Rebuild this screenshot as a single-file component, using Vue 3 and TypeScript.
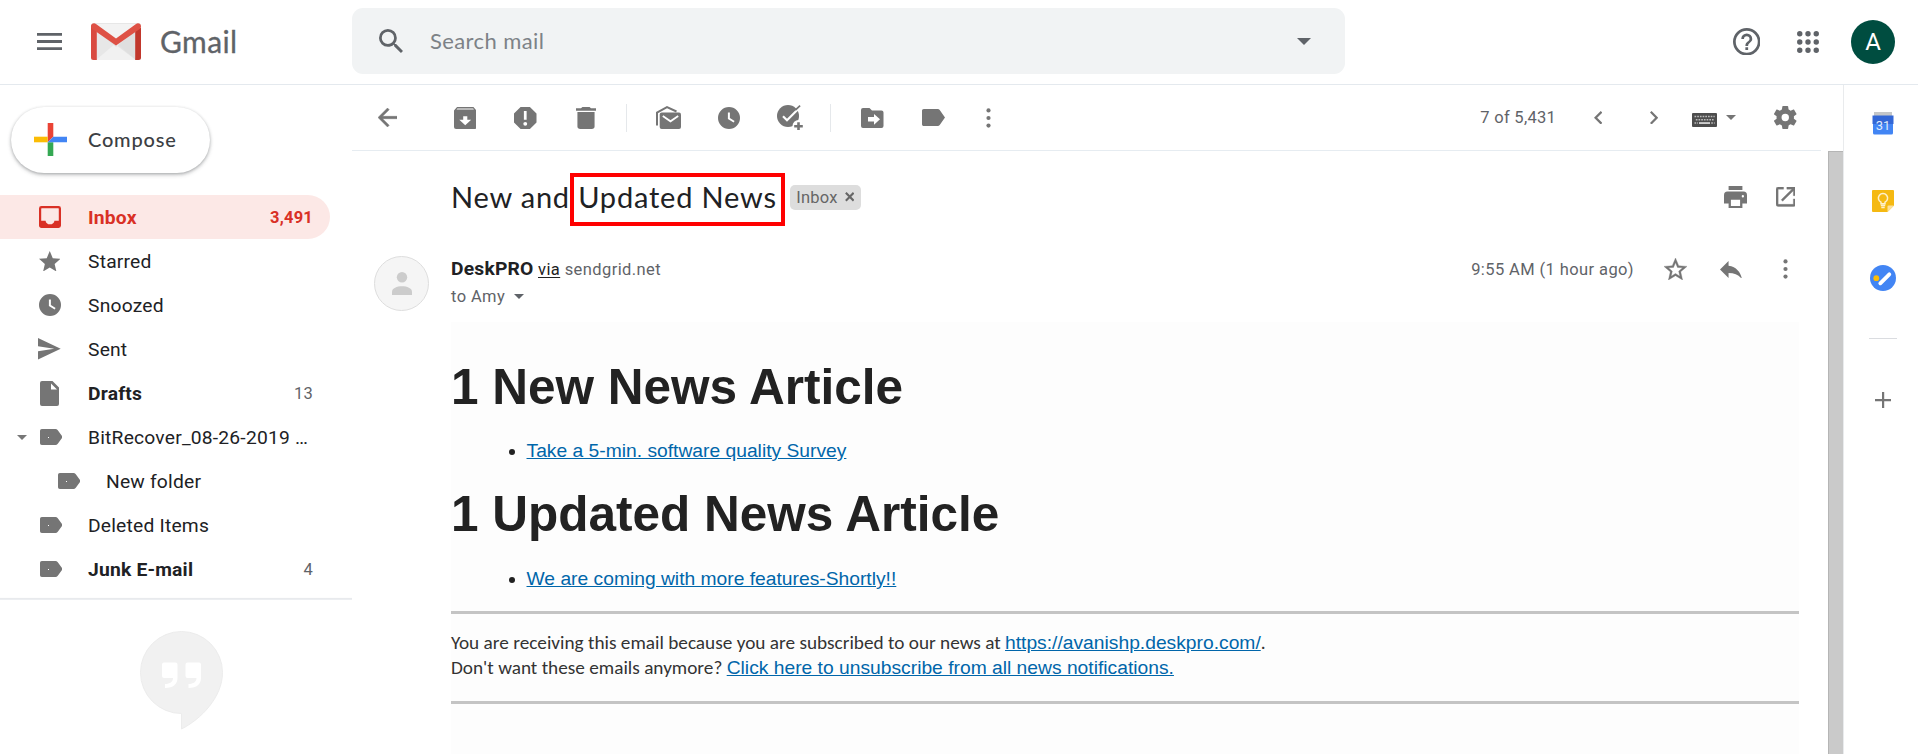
<script setup lang="ts">
import { defineComponent, h } from 'vue'

interface Glyph {
  box: string
  w: number
  h: number
  body: string
}

const glyphs: Record<string, Glyph> = {
  inbox: { box: '3 3 18 18', w: 22, h: 22, body: '<path d="M19 3H5a2 2 0 0 0-2 2v14c0 1.100.9 2 2 2h14a2 2 0 0 0 2-2V5a2 2 0 0 0-2-2zm.2 12H15.600c0 1.700-1.600 3-3.600 3s-3.600-1.300-3.600-3H4.800V5.200c0-.2.200-.4.400-.4h13.600c.2 0 .4.200.4.400V15z"/>' },
  star: { box: '2 2 20 19', w: 21.5, h: 20.5, body: '<path d="M12 17.270 18.180 21l-1.640-7.030L22 9.240l-7.190-.61L12 2 9.190 8.630 2 9.240l5.460 4.730L5.820 21z"/>' },
  starOutline: { box: '2 2 20 19', w: 23, h: 22, body: '<path stroke="currentColor" stroke-width=".3" d="M22 9.240l-7.190-.62L12 2 9.190 8.630 2 9.240l5.460 4.730L5.820 21 12 17.270 18.180 21l-1.630-7.030L22 9.240zM12 15.400l-3.760 2.270 1-4.280-3.320-2.880 4.380-.38L12 6.100l1.710 4.040 4.380.38-3.320 2.880 1 4.280L12 15.400z"/>' },
  clock: { box: '2 2 20 20', w: 22, h: 22, body: '<path d="M12 2a10 10 0 1 0 0 20 10 10 0 0 0 0-20zm4.200 14.200L11 13V7h1.800v5.100l4.300 2.600-.9 1.500z"/>' },
  send: { box: '2 3 21 18', w: 22.7, h: 21.5, body: '<path d="M2.010 21 23 12 2.010 3 2 10l15 2-15 2z"/>' },
  draft: { box: '0 0 19 25', w: 19, h: 25, body: '<path d="M2 0h10.500L19 6.500V23a2 2 0 0 1-2 2H2a2 2 0 0 1-2-2V2a2 2 0 0 1 2-2zm9 2.500v6h6z"/>' },
  tag: { box: '0 0 22.7 16', w: 22.7, h: 16, body: '<path d="M1.800 0h13.700c.9 0 1.600.4 2.100 1.100L22.700 8l-5.100 6.900c-.5.700-1.200 1.100-2.100 1.100H1.800A1.800 1.800 0 0 1 0 14.200V1.800A1.800 1.800 0 0 1 1.800 0z"/><path fill="#fff" d="M8 8h1v1H8z"/>' },
  label: { box: '3 5 19 14', w: 23, h: 17, body: '<path d="M17.630 5.840C17.270 5.330 16.670 5 16 5H4.500C3.600 5 3 5.600 3 6.500v11c0 .9.6 1.500 1.500 1.500H16c.67 0 1.270-.33 1.630-.84L22 12z"/>' },
  caret: { box: '0 0 10 5', w: 10, h: 5, body: '<path d="M0 0h10L5 5z"/>' },
  searchCaret: { box: '0 0 14 7', w: 14, h: 7, body: '<path d="M0 0h14L7 7z"/>' },
  menu: { box: '0 0 25 17', w: 25, h: 17, body: '<path d="M0 0h25v2.800H0zM0 7.100h25v2.800H0zM0 14.200h25V17H0z"/>' },
  search: { box: '3 3 17.5 17.500', w: 24, h: 24, body: '<path d="M15.500 14h-.79l-.28-.27A6.470 6.470 0 0 0 16 9.500 6.500 6.500 0 1 0 9.500 16c1.610 0 3.090-.59 4.230-1.570l.27.280v.79l5 4.990L20.490 19zm-6 0a4.500 4.500 0 1 1 0-9 4.500 4.500 0 0 1 0 9z"/>' },
  back: { box: '4 4 16 16', w: 19, h: 19, body: '<path stroke="currentColor" stroke-width=".4" d="M20 11H7.830l5.590-5.590L12 4l-8 8 8 8 1.410-1.410L7.830 13H20z"/>' },
  archive: { box: '0 0 22 22', w: 22.5, h: 22, body: '<path d="M3 0h16l3 3.500V20a2 2 0 0 1-2 2H2a2 2 0 0 1-2-2V3.500zm.3 1.600-.8 1h17l-.8-1zM9 9.200v3.600H5.200L11 18.200l5.800-5.400H13V9.200z"/>' },
  spam: { box: '3 3 18 18', w: 22.5, h: 22, body: '<path d="M15.730 3H8.270L3 8.270v7.460L8.270 21h7.460L21 15.730V8.270zM12 18.300a1.550 1.550 0 1 1 0-3.100 1.550 1.550 0 0 1 0 3.100zm1.100-4.800h-2.200V6.300h2.200z"/>' },
  trash: { box: '5 3 14 18', w: 20, h: 22, body: '<path d="M6 19a2 2 0 0 0 2 2h8a2 2 0 0 0 2-2V7H6zM19 4h-3.500l-1-1h-5l-1 1H5v2h14z"/>' },
  unread: { box: '0 0 25 23', w: 25, h: 23, body: '<path fill="none" stroke="currentColor" stroke-width="2" d="M1 19.500V6.500L11 1.200l9.500 4.300"/><rect x="3.700" y="6.500" width="21.300" height="16.500" rx="2"/><path fill="none" stroke="#fff" stroke-width="1.800" d="m6.800 10 7.700 5.300 7.700-5.300"/>' },
  addTask: { box: '0 0 26 25', w: 26, h: 25, body: '<circle cx="11" cy="11" r="11"/><path fill="none" stroke="#fff" stroke-width="2.200" d="m6 11.200 4 4L22.500 2.700"/><path fill="none" stroke="currentColor" stroke-width="1.700" d="m18.300 5.200 4.800-4.500"/><circle cx="21.500" cy="21" r="6" fill="#fff"/><path d="M20.200 17.300h2.600V20h3v2.400h-3v2.600h-2.600v-2.600h-3V20h3z"/>' },
  move: { box: '0 0 22.500 20', w: 22.5, h: 20, body: '<path d="M2 0h6.500L11 2.500h9.500a2 2 0 0 1 2 2V18a2 2 0 0 1-2 2H2a2 2 0 0 1-2-2V2a2 2 0 0 1 2-2zm11 6v3H7v4.500h6v3.200l6-5.400z"/>' },
  more: { box: '0 0 5 20', w: 5, h: 20, body: '<circle cx="2.500" cy="2.400" r="2.100"/><circle cx="2.500" cy="10" r="2.100"/><circle cx="2.500" cy="17.600" r="2.100"/>' },
  prev: { box: '8 6 7.400 12', w: 8.3, h: 13.5, body: '<path d="M15.410 7.410 14 6l-6 6 6 6 1.410-1.410L10.830 12z"/>' },
  next: { box: '8.600 6 7.400 12', w: 8.3, h: 13.5, body: '<path d="M10 6 8.590 7.410 13.170 12l-4.580 4.590L10 18l6-6z"/>' },
  keyboard: { box: '0 0 25 14', w: 25, h: 14, body: '<rect width="25" height="14" rx="1" fill="#4d4d4d"/><path fill="none" stroke="#bbb" stroke-width="1.500" stroke-dasharray="1.700 1" d="M2.500 3.500h20.200M3.800 6.700h17.800M2.500 10h3.500M19.200 10h3.500"/><path fill="#ddd" d="M7 9.200h11v1.700H7z"/>' },
  gear: { box: '2.300 2 19.400 20', w: 22.5, h: 23, body: '<path d="M19.430 12.980c.04-.32.070-.64.070-.98s-.03-.66-.07-.98l2.110-1.650c.19-.15.240-.42.120-.64l-2-3.460c-.12-.22-.39-.3-.61-.22l-2.490 1c-.52-.4-1.080-.73-1.690-.98l-.38-2.650A.488.488 0 0 0 14 2h-4c-.25 0-.46.180-.49.420l-.38 2.650c-.61.250-1.170.59-1.690.98l-2.490-1c-.23-.09-.49 0-.61.220l-2 3.460c-.13.220-.07.490.12.640l2.110 1.650c-.04.320-.07.650-.07.980s.03.660.070.98l-2.110 1.650c-.19.150-.24.420-.12.640l2 3.460c.12.220.39.300.61.220l2.490-1c.52.400 1.080.73 1.690.98l.38 2.650c.03.240.24.420.49.420h4c.25 0 .46-.18.490-.42l.38-2.650c.61-.25 1.170-.59 1.690-.98l2.490 1c.23.090.49 0 .61-.22l2-3.460c.12-.22.070-.49-.12-.64zM12 15.200a3.200 3.200 0 1 1 0-6.400 3.200 3.200 0 0 1 0 6.400z"/>' },
  help: { box: '2 2 20 20', w: 27.5, h: 27.5, body: '<path d="M11 18h2v-2h-2zm1-16a10 10 0 1 0 0 20 10 10 0 0 0 0-20zm0 18a8 8 0 1 1 0-16 8 8 0 0 1 0 16zm0-14a4 4 0 0 0-4 4h2a2 2 0 1 1 4 0c0 2-3 1.750-3 5h2c0-2.250 3-2.500 3-5a4 4 0 0 0-4-4z"/>' },
  apps: { box: '0 0 22 22', w: 22, h: 22, body: '<path stroke="currentColor" stroke-width="5.400" stroke-linecap="round" d="M2.750 2.750h.01M11 2.750h.01M19.250 2.750h.01M2.750 11h.01M11 11h.01M19.250 11h.01M2.750 19.250h.01M11 19.250h.01M19.250 19.250h.01"/>' },
  print: { box: '2 3 20 18', w: 23, h: 22.5, body: '<path d="M19 7.400H5a3 3 0 0 0-3 3V17h4v4h12v-4h4v-6.600a3 3 0 0 0-3-3zM16 19H8v-5h8zm2.400-6.900a1 1 0 1 1 0-2 1 1 0 0 1 0 2zM18 3H6v3.200h12z"/>' },
  popout: { box: '3 3 18 18', w: 19.5, h: 19.5, body: '<path stroke="currentColor" stroke-width=".3" d="M19 19H5V5h5V3H5a2 2 0 0 0-2 2v14a2 2 0 0 0 2 2h14a2 2 0 0 0 2-2v-5h-2zM13 3v2h4.590l-9.830 9.830 1.410 1.410L19 6.410V11h2V3z"/>' },
  reply: { box: '3 5 18 14', w: 22, h: 17, body: '<path d="M10 9V5l-7 7 7 7v-4.100c5 0 8.500 1.600 11 5.100-1-5-4-10-11-11z"/>' },
  person: { box: '0 0 20 23', w: 20, h: 23, body: '<circle cx="10" cy="5.200" r="5.200"/><path d="M0 23v-3.200c0-3.800 5-5.600 10-5.600s10 1.800 10 5.600V23z"/>' },
  close: { box: '0 0 9 9', w: 9.5, h: 9.5, body: '<path fill="none" stroke="currentColor" stroke-width="2" d="m.8.800 7.400 7.400m0-7.400L.8 8.200"/>' },
  plus: { box: '0 0 16 16', w: 16, h: 16, body: '<path d="M7 0h2.200v7H16v2.200H9.200V16H7V9.200H0V7h7z"/>' },
}

const Icon = defineComponent({
  props: { name: { type: String, required: true } },
  setup(props) {
    return () => {
      const g = glyphs[props.name]
      return h('svg', { viewBox: g.box, width: g.w, height: g.h, preserveAspectRatio: 'none', fill: 'currentColor', innerHTML: g.body })
    }
  },
})

interface Folder {
  label: string
  icon: string
  count?: string
  active?: boolean
  bold?: boolean
  child?: boolean
  open?: boolean
}

const folders: Folder[] = [
  { label: 'Inbox', icon: 'inbox', count: '3,491', active: true, bold: true },
  { label: 'Starred', icon: 'star' },
  { label: 'Snoozed', icon: 'clock' },
  { label: 'Sent', icon: 'send' },
  { label: 'Drafts', icon: 'draft', count: '13', bold: true },
  { label: 'BitRecover_08-26-2019 …', icon: 'tag', open: true },
  { label: 'New folder', icon: 'tag', child: true },
  { label: 'Deleted Items', icon: 'tag' },
  { label: 'Junk E-mail', icon: 'tag', count: '4', bold: true },
]

const toolGroups: string[][] = [['archive', 'spam', 'trash'], ['unread', 'clock', 'addTask'], ['move', 'label']]
</script>

<template>
  <div class="app">
    <header class="top">
      <div class="brand">
        <Icon name="menu" class="burger" />
        <svg class="logo" viewBox="0 0 50 37" width="50" height="37">
          <rect width="50" height="37" rx="2.500" fill="#e7e7e7" />
          <path d="M5 37 25 20l20 17z" fill="#f1f1f1" />
          <path d="M2 1h46L25 20z" fill="#f3f3f3" />
          <path d="m5 7 20 17L45 7v30z" fill="#d9d9d9" opacity=".55" />
          <path d="M0 2.500h5.800V37H2.500A2.500 2.500 0 0 1 0 34.500z" fill="#d94a40" />
          <path d="M44.200 5H50v29.500a2.500 2.500 0 0 1-2.500 2.500h-3.300z" fill="#c1372c" />
          <path d="M0 3.500C0 .8 2.800-.6 5 1l20 14.500L45 1c2.200-1.600 5-.2 5 2.500 0 1-.5 2-1.300 2.600L25 22.500 1.300 6.100A3.200 3.200 0 0 1 0 3.500z" fill="#de5145" />
        </svg>
        <span class="word">Gmail</span>
      </div>
      <div class="search">
        <Icon name="search" />
        <span class="placeholder">Search mail</span>
        <Icon name="searchCaret" class="search-caret" />
      </div>
      <div class="account">
        <Icon name="help" />
        <Icon name="apps" />
        <span class="me">A</span>
      </div>
    </header>

    <div class="main">
      <aside class="side">
        <div class="compose">
          <svg viewBox="0 0 33 33" width="33" height="33">
            <path fill="#ea4335" d="M13.700 0h5.600v13.700l-5.600 5.600z" />
            <path fill="#fbbc05" d="M0 13.700h13.700v5.600H0z" />
            <path fill="#34a853" d="M13.700 19.300h5.600V33h-5.600z" />
            <path fill="#4285f4" d="M19.300 13.700H33v5.600H13.700z" />
          </svg>
          <span>Compose</span>
        </div>
        <nav class="folders">
          <div v-for="f in folders" :key="f.label" class="folder" :class="{ active: f.active, bold: f.bold, child: f.child }">
            <span class="twisty"><Icon v-if="f.open" name="caret" /></span>
            <span class="ficon" :class="{ tagged: f.icon === 'tag' }"><Icon :name="f.icon" /></span>
            <span class="fname">{{ f.label }}</span>
            <span class="count">{{ f.count }}</span>
          </div>
        </nav>
        <div class="chat">
          <svg viewBox="0 0 83 99" width="83" height="99">
            <path fill="#f1f1f1" stroke="#ececec" d="M41.500.5a41 41 0 0 1 41 41c0 25-22 47-41 56.500V82.500a41 41 0 0 1 0-82z" />
            <path fill="#fff" d="M24 31.500h11.500a2 2 0 0 1 2 2V47c0 6-4 10-12.500 10v-4c5 0 8-2.200 8-6h-9a2 2 0 0 1-2-2V33.500a2 2 0 0 1 2-2zM47.500 31.500H59a2 2 0 0 1 2 2V47c0 6-4 10-12.500 10v-4c5 0 8-2.200 8-6h-9a2 2 0 0 1-2-2V33.500a2 2 0 0 1 2-2z" />
          </svg>
        </div>
      </aside>

      <section class="content">
        <div class="toolbar">
          <span class="cell back"><Icon name="back" /></span>
          <span class="gap"></span>
          <template v-for="(group, i) in toolGroups" :key="i">
            <span v-if="i" class="divider"></span>
            <span v-for="name in group" :key="name" class="cell"><Icon :name="name" /></span>
          </template>
          <span class="cell narrow"><Icon name="more" /></span>
          <div class="pager">
            <span class="range">7 of 5,431</span>
            <span class="cell step"><Icon name="prev" /></span>
            <span class="cell step"><Icon name="next" /></span>
            <span class="input-tools"><Icon name="keyboard" /><Icon name="caret" /></span>
            <span class="cell edge"><Icon name="gear" /></span>
          </div>
        </div>

        <div class="reader">
          <article class="mail">
            <div class="subject">
              <h2>New and <span class="marked">Updated News</span></h2>
              <span class="chip">Inbox <Icon name="close" /></span>
              <div class="actions">
                <span class="cell print"><Icon name="print" /></span>
                <span class="cell edge"><Icon name="popout" /></span>
              </div>
            </div>
            <div class="sender">
              <div class="face"><Icon name="person" /></div>
              <div class="who">
                <div class="from"><b>DeskPRO</b> <u>via</u> <span class="host">sendgrid.net</span></div>
                <div class="to">to Amy <Icon name="caret" /></div>
              </div>
              <div class="actions">
                <span class="time">9:55 AM (1 hour ago)</span>
                <span class="cell edge"><Icon name="starOutline" /></span>
                <span class="cell edge"><Icon name="reply" /></span>
                <span class="cell edge"><Icon name="more" /></span>
              </div>
            </div>
            <div class="letter">
              <h1>1 New News Article</h1>
              <ul><li><a>Take a 5-min. software quality Survey</a></li></ul>
              <h1>1 Updated News Article</h1>
              <ul><li><a>We are coming with more features-Shortly!!</a></li></ul>
              <div class="rule"></div>
              <p>
                You are receiving this email because you are subscribed to our news at <a>https://avanishp.deskpro.com/</a>.<br />
                Don't want these emails anymore? <a>Click here to unsubscribe from all news notifications.</a>
              </p>
              <div class="rule"></div>
            </div>
          </article>
          <div class="scroll"></div>
        </div>
      </section>

      <aside class="addons">
        <div class="addon">
          <svg viewBox="0 0 22 23" width="22" height="23">
            <path fill="#c4c6c8" d="M2 0h18v4H2z" />
            <path fill="#3367d6" d="M.5 3.500h21V12h-21z" />
            <path fill="#4285f4" d="M1 12h20v9a1.500 1.500 0 0 1-1.500 1.500h-17A1.500 1.500 0 0 1 1 21z" />
            <text x="11" y="17.500" class="day" text-anchor="middle">31</text>
          </svg>
        </div>
        <div class="addon">
          <svg viewBox="0 0 22 22" width="22" height="22">
            <path fill="#f5b912" d="M1 0h20a1 1 0 0 1 1 1v14.500L15.500 22H1a1 1 0 0 1-1-1V1a1 1 0 0 1 1-1z" />
            <path fill="#fce19c" d="M15.500 22v-5.500a1 1 0 0 1 1-1H22z" />
            <path fill="none" stroke="#fdf0cd" stroke-width="1.500" d="M9 13.800v-1.600a4.600 4.600 0 1 1 4 0v1.600zM8.800 15.600h4.400M9.300 17.400h3.400" />
          </svg>
        </div>
        <div class="addon">
          <svg viewBox="0 0 26 26" width="26" height="26">
            <circle cx="13" cy="13" r="13" fill="#4285f4" />
            <circle cx="6.300" cy="13.200" r="2.900" fill="#fbbc05" />
            <path stroke="#fff" stroke-width="3.800" stroke-linecap="round" d="m10.300 18.300 9-9" />
          </svg>
        </div>
        <div class="separator"></div>
        <div class="addon add"><Icon name="plus" /></div>
      </aside>
    </div>
  </div>
</template>

<style>
body {
  margin: 0;
  overflow: hidden;
  background: #fff;
}
</style>

<style scoped>
.app {
  width: 1918px;
  height: 754px;
  overflow: hidden;
  display: flex;
  flex-direction: column;
  font-family: Roboto, sans-serif;
  color: #202124;
}
svg {
  display: block;
  flex: none;
}
.top {
  box-sizing: border-box;
  height: 85px;
  flex: none;
  display: flex;
  align-items: flex-start;
  border-bottom: 1px solid #e4e9ee;
  color: #5f6368;
}
.brand {
  box-sizing: border-box;
  width: 352px;
  height: 83px;
  padding-left: 37px;
  display: flex;
  align-items: center;
}
.logo {
  margin-left: 29px;
}
.word {
  margin: -1px 0 0 19px;
  font: 400 30px Lato, sans-serif;
  letter-spacing: 0.4px;
  -webkit-text-stroke: 0.3px #5f6368;
}
.search {
  box-sizing: border-box;
  width: 993px;
  height: 66px;
  margin-top: 8px;
  padding: 0 34px 0 27px;
  border-radius: 11px;
  background: #f1f3f4;
  display: flex;
  align-items: center;
}
.placeholder {
  margin: -1px 0 0 27px;
  font: 22px Lato, sans-serif;
  letter-spacing: 0.4px;
  color: #7d8287;
}
.search-caret {
  margin-left: auto;
}
.account {
  height: 83px;
  margin-left: auto;
  padding-right: 23px;
  display: flex;
  align-items: center;
  gap: 36.500px;
}
.me {
  width: 44px;
  height: 44px;
  margin-left: -4px;
  border-radius: 50%;
  background: #004d40;
  color: #fff;
  font-size: 24px;
  font-weight: 400;
  line-height: 45px;
  text-align: center;
}
.main {
  flex: 1;
  display: flex;
  min-height: 0;
}
.side {
  width: 352px;
  flex: none;
  display: flex;
  flex-direction: column;
}
.compose {
  box-sizing: border-box;
  width: 199px;
  height: 66px;
  margin: 22px 0 22px 11px;
  padding: 0 0 1px 22.500px;
  border-radius: 33px;
  box-shadow: 0 1px 3px rgba(60, 64, 67, 0.3), 0 2px 4px rgba(60, 64, 67, 0.22);
  display: flex;
  align-items: center;
  color: #3c4043;
  font: 500 20px Lato, sans-serif;
  letter-spacing: 0.8px;
}
.compose span {
  margin: -2px 0 0 21.500px;
}
.folders {
  height: 404px;
  flex: none;
  border-bottom: 1px solid #eceef1;
  box-shadow: inset 0 -2px 1px -1px #e6e8ec;
}
.folder {
  box-sizing: border-box;
  width: 330px;
  height: 44px;
  padding-right: 17px;
  border-radius: 0 22px 22px 0;
  display: flex;
  align-items: center;
  font-size: 19.250px;
  letter-spacing: 0.200px;
}
.active {
  background: #fce8e6;
}
.child {
  padding-left: 18px;
}
.twisty {
  width: 27px;
  display: flex;
  justify-content: flex-end;
  color: #777;
}
.ficon {
  width: 45px;
  display: flex;
  justify-content: center;
  color: #757575;
}
.tagged {
  padding-left: 3px;
  width: 42px;
}
.fname {
  margin-left: 16px;
  white-space: nowrap;
}
.bold .fname {
  font-weight: 700;
}
.count {
  margin-left: auto;
  font-size: 16.500px;
  color: #5f6368;
}
.active .ficon,
.active .fname,
.active .count {
  color: #d93025;
}
.active .count {
  font-weight: 700;
}
.chat {
  padding: 31px 0 0 140px;
}
.content {
  width: 1491px;
  flex: none;
  display: flex;
  flex-direction: column;
}
.toolbar {
  box-sizing: border-box;
  width: 1469px;
  height: 66px;
  flex: none;
  padding-left: 5px;
  border-bottom: 1px solid #e6ecf1;
  display: flex;
  align-items: center;
  color: #757575;
}
.cell {
  width: 60.500px;
  flex: none;
  display: flex;
  justify-content: center;
}
.gap {
  width: 17px;
}
.divider {
  width: 1px;
  height: 28px;
  margin: 0 11.300px 0 10.200px;
  background: #e5e8eb;
}
.narrow {
  width: 49.600px;
}
.pager {
  margin-left: auto;
  margin-right: 7.800px;
  display: flex;
  align-items: center;
}
.range {
  margin-right: 14px;
  font-size: 16.500px;
  letter-spacing: 0.300px;
  color: #5f6368;
}
.step {
  width: 56px;
}
.input-tools {
  padding: 0 22.500px 0 9.500px;
  display: flex;
  align-items: center;
  gap: 9px;
}
.input-tools svg:first-child {
  margin-top: 4px;
}
.edge {
  width: 55px;
}
.reader {
  flex: 1;
  display: flex;
  min-height: 0;
}
.mail {
  width: 1476px;
  overflow: hidden;
}
.subject {
  height: 48px;
  padding: 22px 15px 0 99px;
  display: flex;
  align-items: center;
}
h2 {
  margin: 0;
  font: 29px/48px Lato, sans-serif;
  letter-spacing: 0.800px;
  white-space: nowrap;
}
.marked {
  position: relative;
}
.marked::after {
  content: '';
  position: absolute;
  left: -8px;
  right: -8px;
  top: -6px;
  height: 45px;
  border: 4px solid #f00;
}
.chip {
  box-sizing: border-box;
  width: 71px;
  height: 25px;
  margin-left: 13.500px;
  padding-left: 6px;
  border-radius: 5px;
  background: #ddd;
  color: #666;
  display: flex;
  align-items: center;
  gap: 7px;
  font-size: 16.500px;
  letter-spacing: 0.200px;
}
.actions {
  margin-left: auto;
  display: flex;
  align-items: center;
  color: #757575;
}
.print {
  width: 46px;
}
.sender {
  height: 101px;
  padding: 0 15px 0 22px;
  display: flex;
  align-items: flex-start;
}
.face {
  box-sizing: border-box;
  width: 55px;
  height: 55px;
  margin-top: 35px;
  border: 1px solid #dedede;
  border-radius: 50%;
  background: #f5f5f5;
  color: #ccc;
  display: flex;
  align-items: center;
  justify-content: center;
}
.who {
  margin: 34px 0 0 22px;
  letter-spacing: 0.400px;
  font-size: 16.500px;
  color: #5f6368;
}
.from {
  height: 28px;
  line-height: 28px;
}
.from b {
  font-size: 19.250px;
  letter-spacing: 0.200px;
  color: #202124;
}
.from u {
  color: #222;
  text-underline-offset: 2px;
}
.to {
  display: flex;
  align-items: center;
  gap: 9px;
  line-height: 27px;
}
.sender .actions {
  height: 24px;
  margin-top: 36px;
}
.time {
  margin-right: 14px;
  font-size: 16.500px;
  letter-spacing: 0.400px;
  color: #5f6368;
}
.letter {
  height: 432px;
  margin: 0 29px 0 99px;
  padding-top: 37px;
  box-sizing: border-box;
  background: #fdfdfd;
  color: #222;
  font-family: 'Liberation Sans', Arial, sans-serif;
}
h1 {
  margin: 0;
  font-size: 49.500px;
  line-height: 56px;
}
ul {
  margin: 24px 0 23px;
  padding-left: 75.500px;
  font-size: 19.250px;
  line-height: 24px;
}
a {
  color: #06a;
  font-family: 'Liberation Sans', Arial, sans-serif;
  text-decoration: underline;
}
h1 + ul:nth-of-type(2) {
  margin: 25px 0 20px;
}
.rule {
  height: 3px;
  background: #c4c4c4;
}
p {
  margin: 16px 0 21px;
  font: 19.250px/25px Carlito, Calibri, 'Open Sans', sans-serif;
  color: #333;
}
.scroll {
  width: 15px;
  flex: none;
  box-sizing: border-box;
  border-left: 1px solid #b5b5b5;
  border-top: 1px solid #b5b5b5;
  background: #cacaca;
}
.addons {
  flex: 1;
  border-left: 1px solid #e9ebed;
  padding-left: 3.500px;
}
.addon {
  height: 77px;
  display: flex;
  align-items: center;
  justify-content: center;
}
.day {
  font: 13px Roboto, sans-serif;
  fill: #dfe9fb;
}
.separator {
  width: 28px;
  height: 1px;
  margin: 22px auto 22px;
  background: #dadce0;
}
.add {
  color: #757575;
}
</style>
